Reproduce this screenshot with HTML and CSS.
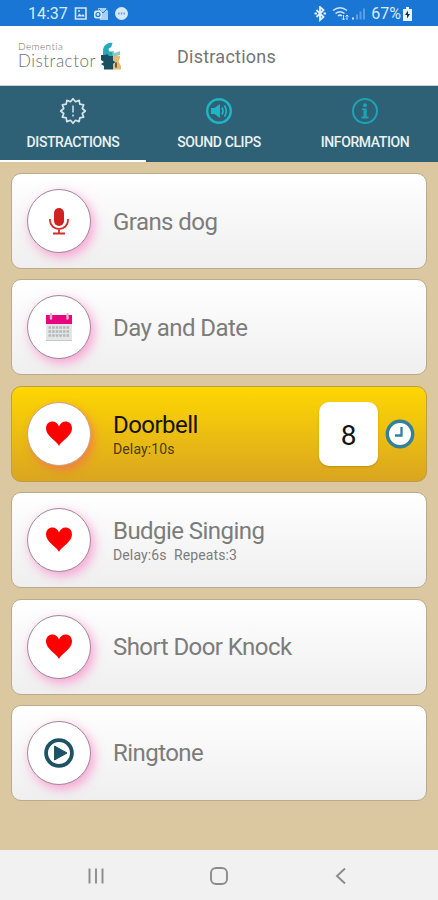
FILE: index.html
```
<!DOCTYPE html>
<html lang="en">

<head>
    <meta charset="UTF-8">
    <title>Distractions</title>
    <link rel="stylesheet" href="styles.css">
</head>

<body>
    <!-- icons used more than once -->
    <svg class="defs">
        <symbol id="heart" viewBox="0 0 26 26">
            <path d="M13 25C11 20 0 15 0 7.500C0 3 3 .5 6.500 .5C9.500 .5 12 2.500 13 5.500C14 2.500 16.500 .5 19.500 .5C23 .5 26 3 26 7.500C26 15 15 20 13 25Z" fill="#fe0000"/>
        </symbol>
    </svg>

    <div class="status">
        <span class="time">14:37</span>
        <svg class="notes" width="56" height="16" viewBox="0 0 56 16">
            <path d="M1.500 2h10.500v11H1.500z" fill="none" stroke="#d5e8fb" stroke-width="1.600"/>
            <path d="M3 10.500l2.500-3 2 2 1.500-1.500 2 2.500z" fill="#d5e8fb"/>
            <circle cx="5" cy="5" r="1" fill="#d5e8fb"/>
            <path d="M24 2h8l2 3v9h-8z" fill="#a9cff5"/>
            <path d="M25 3l4 4 4-4" fill="none" stroke="#1976d2"/>
            <rect x="20" y="4.500" width="8" height="8" rx="2" fill="#d5e8fb"/>
            <circle cx="24" cy="8.500" r="2" fill="none" stroke="#1976d2" stroke-width="1.200"/>
            <circle cx="47.500" cy="7.500" r="6.500" fill="#d5e8fb"/>
            <path d="M44 7.500h7" stroke="#6faae6" stroke-width="2" stroke-dasharray="1.700 1"/>
        </svg>
        <svg class="signals" width="54" height="16" viewBox="0 0 54 16">
            <path d="M2.500 4l7 7L6 14V1l3.500 3-7 7" fill="none" stroke="#e4f1fd" stroke-width="1.800"/>
            <path d="M.5 7.500H3M9.500 7.500H12" stroke="#e4f1fd" stroke-width="1.800"/>
            <path d="M19 4.500q7-5.500 14 0M21.500 7.500q4.500-3.500 9 0M24 10q2-1.700 4 0" fill="none" stroke="#cfe4fa" stroke-width="1.500"/>
            <path d="M29.500 9v5M28 12.500l1.500 1.500 1.500-1.500M33 14V9M31.500 10.500L33 9l1.500 1.500" fill="none" stroke="#cfe4fa"/>
            <path d="M39 11.500v2" stroke="#cfe4fa" stroke-width="2"/>
            <path d="M43 8.500v5M46.500 5.500v8M50 2.500v11" stroke="#5b9fe3" stroke-width="2"/>
        </svg>
        <span class="percent">67%</span>
        <svg class="battery" width="9" height="14" viewBox="0 0 9 14">
            <path d="M3 0h3v2h3v12H0V2h3z" fill="#e8f3fd"/>
            <path d="M5 3.500L2 8h2v3.500L7 7H5z" fill="#17314d"/>
        </svg>
    </div>

    <div class="header">
        <div class="logo">
            <div class="logo-text">
                <span class="logo-top">Dementia</span>
                <span class="logo-name">Distractor</span>
            </div>
            <svg width="22" height="28" viewBox="0 0 22 28">
                <path d="M12.500 1C7 0 3 4 3 9v5h11V9.500H9.500C8 8 8.500 5.500 11 5.500z" fill="#27aabb"/>
                <path d="M12 9l3 2 5-2v4l-7 2z" fill="#8ec9c2"/>
                <path d="M1 13h4l2-1 2 2h4v4l3 2-3 2v5.500H4V24l-3-2 3-2-3-2z" fill="#1d4f63"/>
                <path d="M13 14h7v2l-1.500 3.500L21 24v3.500h-8v-5l3-2-3-2z" fill="#e5b976"/>
                <path d="M15 20.500h2v5h-2z" fill="#6c5a43"/>
            </svg>
        </div>
        <h1>Distractions</h1>
    </div>

    <div class="tabs">
        <div class="tab active">
            <svg width="28" height="28" viewBox="-14 -14 28 28">
                <path d="M12.300 0L9.270 2.480L10.650 6.150L6.790 6.790L6.150 10.650L2.480 9.270L0 12.300L-2.480 9.270L-6.150 10.650L-6.790 6.790L-10.650 6.150L-9.270 2.480L-12.300 0L-9.270-2.480L-10.650-6.150L-6.790-6.790L-6.150-10.650L-2.480-9.270L0-12.300L2.480-9.270L6.150-10.650L6.790-6.790L10.650-6.150L9.270-2.480Z" fill="none" stroke="#d5e4ec" stroke-width="1.700" stroke-linejoin="round"/>
                <path d="M0-5.500v7M0 3.500v2" stroke="#d5e4ec" stroke-width="1.500"/>
            </svg>
            <span>DISTRACTIONS</span>
        </div>
        <div class="tab">
            <svg width="28" height="28" viewBox="-14 -14 28 28">
                <circle r="11.800" fill="none" stroke="#1fb5c3" stroke-width="2.400"/>
                <path d="M-8-3h3.500L1-7V7L-4.500 3H-8z" fill="#1fb5c3"/>
                <path d="M3-3.500q2 3.500 0 7M5.500-5.500q3.500 5.500 0 11" fill="none" stroke="#1fb5c3" stroke-width="1.700"/>
            </svg>
            <span>SOUND CLIPS</span>
        </div>
        <div class="tab">
            <svg width="28" height="28" viewBox="-14 -14 28 28">
                <circle r="12" fill="none" stroke="#1ba5b4" stroke-width="2"/>
                <circle cx="0" cy="-5.700" r="2" fill="#1ba5b4"/>
                <path d="M-3-2.500H1.700V5.500H3.500V7.500H-3.500V5.500H-1.500V-1H-3z" fill="#1ba5b4"/>
            </svg>
            <span>INFORMATION</span>
        </div>
    </div>

    <div class="list">
        <div class="card">
            <div class="round">
                <svg width="20" height="28" viewBox="0 0 20 28">
                    <rect x="5" y="1" width="10" height="18" rx="5" fill="#d0201f"/>
                    <path d="M1 12v1.500a9 8.500 0 0 0 18 0V12M10 22v4M4 26.500h12" fill="none" stroke="#d0302c" stroke-width="1.800"/>
                </svg>
            </div>
            <div class="info">
                <div class="name">Grans dog</div>
            </div>
        </div>
        <div class="card">
            <div class="round">
                <svg width="26" height="29" viewBox="0 0 26 29">
                    <path d="M0 10h26v17.500H0z" fill="#e4e6e6"/>
                    <path d="M0 27.500h26" stroke="#c6c9c9"/>
                    <path d="M0 2h26v9H0z" fill="#e6067f"/>
                    <path d="M2.500 14.500h21M2.500 18.500h21M2.500 22.500h21" stroke="#b4b8bb" stroke-width="2.500" stroke-dasharray="2.600 1"/>
                    <path d="M5 1v4.500M21.500 1v4.500" stroke="#dfb6cc" stroke-width="2.400" stroke-linecap="round"/>
                </svg>
            </div>
            <div class="info">
                <div class="name">Day and Date</div>
            </div>
        </div>
        <div class="card playing">
            <div class="round">
                <svg width="26" height="26"><use href="#heart"/></svg>
            </div>
            <div class="info">
                <div class="name">Doorbell</div>
                <div class="detail">Delay:10s</div>
            </div>
            <div class="count">8</div>
            <svg class="clock" width="30" height="30" viewBox="-15 -15 30 30">
                <circle r="12.700" fill="#fff" stroke="#33809a" stroke-width="3.400"/>
                <path d="M1.500-7V1.500H-5" fill="none" stroke="#33809a" stroke-width="2.300"/>
            </svg>
        </div>
        <div class="card">
            <div class="round">
                <svg width="26" height="26"><use href="#heart"/></svg>
            </div>
            <div class="info">
                <div class="name">Budgie Singing</div>
                <div class="detail">Delay:6s&nbsp; Repeats:3</div>
            </div>
        </div>
        <div class="card">
            <div class="round">
                <svg width="26" height="26"><use href="#heart"/></svg>
            </div>
            <div class="info">
                <div class="name">Short Door Knock</div>
            </div>
        </div>
        <div class="card">
            <div class="round">
                <svg width="30" height="30" viewBox="-15 -15 30 30">
                    <circle r="12.900" fill="none" stroke="#1d5265" stroke-width="3.800"/>
                    <path d="M-4.500-7L8 0L-4.500 7Z" fill="#1d5265" stroke="#1d5265" stroke-linejoin="round"/>
                </svg>
            </div>
            <div class="info">
                <div class="name">Ringtone</div>
            </div>
        </div>
    </div>

    <div class="nav">
        <svg width="18" height="18" viewBox="0 0 18 18">
            <path d="M2.500 1.500v15M9 1.500v15M15.500 1.500v15" stroke="#8b8b8b" stroke-width="1.900"/>
        </svg>
        <svg width="18" height="18" viewBox="0 0 18 18">
            <rect x="1" y="1" width="16" height="16" rx="5" fill="none" stroke="#8b8b8b" stroke-width="1.900"/>
        </svg>
        <svg width="18" height="18" viewBox="0 0 18 18">
            <path d="M13 1.500L5 9l8 7.500" fill="none" stroke="#8b8b8b" stroke-width="1.900"/>
        </svg>
    </div>
</body>

</html>
```
FILE: styles.css
```
* {
    box-sizing: border-box;
}

body {
    margin: 0;
    height: 900px;
    display: flex;
    flex-direction: column;
    font-family: Roboto, "Liberation Sans", sans-serif;
    background: #dcc8a0;
    overflow: hidden;
}

svg {
    display: block;
    flex: none;
}

.defs {
    display: none;
}

.status {
    display: flex;
    align-items: center;
    height: 26px;
    padding: 1px 26px 0 28px;
    background: #1976d4;
    color: #d9eafc;
    font-size: 16px;
}

.notes {
    margin-left: 6px;
}

.signals {
    margin-left: auto;
}

.percent {
    margin-left: 3px;
}

.battery {
    margin-left: 2px;
}

.header {
    display: flex;
    align-items: center;
    height: 60px;
    padding: 0 18px;
    background: #fff;
    border-bottom: 1px solid #c5d3da;
}

.logo {
    display: flex;
    align-items: center;
    width: 159px;
    gap: 3px;
}

.logo-text {
    width: 79px;
    color: #6f6f6f;
    font-family: Lato, "Liberation Sans", sans-serif;
    font-weight: 300;
    white-space: nowrap;
}

.logo-text span {
    display: block;
}

.logo-top {
    font-size: 10px;
    line-height: 12px;
    letter-spacing: .4px;
}

.logo-name {
    font-size: 17px;
    line-height: 20px;
    margin-top: -1px;
    letter-spacing: .5px;
}

.header h1 {
    margin: 2px 0 0;
    color: #747474;
    font-size: 18px;
    font-weight: 400;
    letter-spacing: .25px;
}

.tabs {
    display: flex;
    height: 76px;
    background: #2f6176;
}

.tab {
    flex: 1;
    display: flex;
    flex-direction: column;
    align-items: center;
    padding-top: 11px;
    color: #e9f1f4;
    font-size: 14px;
    font-weight: 500;
    letter-spacing: -.4px;
    border-bottom: 2px solid #2f6176;
}

.tab span {
    margin-top: 8px;
    line-height: 18px;
}

.tab.active {
    border-bottom-color: #fff;
}

.list {
    flex: 1;
    display: flex;
    flex-direction: column;
    gap: 10.400px;
    padding: 11px 11px 0 11px;
}

.card {
    display: flex;
    align-items: center;
    height: 96px;
    padding: 0 11px 0 15px;
    border: 1px solid #b9ab8c;
    border-radius: 10px;
    background: linear-gradient(#fff, #efefef);
    color: #7c7c7c;
}

.round {
    display: flex;
    align-items: center;
    justify-content: center;
    width: 64px;
    height: 64px;
    border: 1px solid #9c8b97;
    border-radius: 50%;
    background: #fff;
    box-shadow: 3px 4px 11px rgba(255, 80, 180, .5);
}

.info {
    flex: 1;
    margin-left: 22px;
    padding-top: 1px;
}

.name {
    font-size: 24px;
    line-height: 28px;
    letter-spacing: -.55px;
}

.detail {
    margin-top: 2px;
    font-size: 14px;
    line-height: 17px;
    letter-spacing: .13px;
}

.playing {
    border-color: #bd9d4c;
    background: linear-gradient(#fed702, #daa520);
    color: #15120a;
}

.playing .detail {
    color: #4a3b0c;
}

.playing .round {
    border-color: #c3a783;
    box-shadow: 3px 4px 9px rgba(255, 80, 110, .5);
}

.count {
    width: 59px;
    height: 64px;
    border-radius: 10px;
    background: #fff;
    box-shadow: 0 1px 2px rgba(120, 80, 0, .3);
    font-size: 28px;
    line-height: 67px;
    text-align: center;
}

.clock {
    margin-left: 7px;
}

.nav {
    display: flex;
    align-items: center;
    justify-content: space-between;
    height: 50px;
    padding: 2px 88px 0 87px;
    background: #f1f1f1;
}
```
